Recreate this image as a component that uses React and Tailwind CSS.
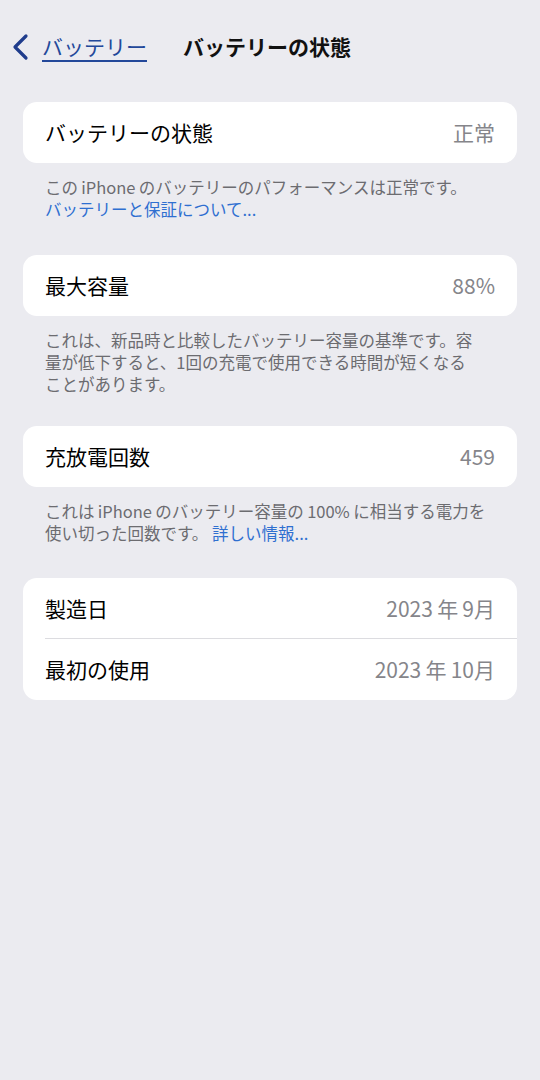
const jp = { fontFamily: '"Noto Sans CJK JP", "Noto Sans", sans-serif' };

function Row({ label, value, divider }) {
  return (
    <div className="relative flex h-[61px] items-center justify-between pl-[22px] pr-[22px]">
      <span className="text-[21px] text-black">{label}</span>
      <span className="text-[21px] text-[#85858a]">{value}</span>
      {divider && <div className="absolute bottom-0 left-[22px] right-0 h-px bg-[#dcdce0]" />}
    </div>
  );
}

function Card({ children }) {
  return <div className="mx-[23px] overflow-hidden rounded-[14px] bg-white">{children}</div>;
}

function Footer({ children }) {
  return (
    <p className="px-[45px] pt-[13px] text-[16.5px] leading-[22px] text-[#6c6c70]">{children}</p>
  );
}

export default function App() {
  return (
    <div className="min-h-[1080px] w-full bg-[#ebebf0] pt-[23px]" style={jp}>
      {/* ナビゲーションバー */}
      <div className="flex h-[48px] items-center">
        <svg width="20" height="28" viewBox="0 0 20 28" className="ml-[10px]">
          <path d="M16 3 L5 14 L16 25" fill="none" stroke="#1f3c8c" strokeWidth="3.2" strokeLinecap="round" strokeLinejoin="round" />
        </svg>
        <span className="ml-[12px] text-[21px] text-[#23489a] underline underline-offset-[5px] decoration-[1.5px]">バッテリー</span>
        <span className="ml-[36px] text-[21px] font-bold text-[#111]">バッテリーの状態</span>
      </div>

      <div className="mt-[31px]">
        <Card>
          <Row label="バッテリーの状態" value="正常" />
        </Card>
        <Footer>
          この{'\u2009'}iPhone{'\u2009'}のバッテリーのパフォーマンスは正常です。
          <br />
          <span className="text-[#2f6fd0]">バッテリーと保証について...</span>
        </Footer>
      </div>

      <div className="mt-[35px]">
        <Card>
          <Row label="最大容量" value="88%" />
        </Card>
        <Footer>
          これは、新品時と比較したバッテリー容量の基準です。容
          <br />
          量が低下すると、1回の充電で使用できる時間が短くなる
          <br />
          ことがあります。
        </Footer>
      </div>

      <div className="mt-[31px]">
        <Card>
          <Row label="充放電回数" value="459" />
        </Card>
        <Footer>
          これは{'\u2009'}iPhone{'\u2009'}のバッテリー容量の{'\u2009'}100%{'\u2009'}に相当する電力を
          <br />
          使い切った回数です。 <span className="text-[#2f6fd0]">詳しい情報...</span>
        </Footer>
      </div>

      <div className="mt-[34px]">
        <Card>
          <Row label="製造日" value={'2023\u2009年\u20099月'} divider />
          <Row label="最初の使用" value={'2023\u2009年\u200910月'} />
        </Card>
      </div>
    </div>
  );
}
